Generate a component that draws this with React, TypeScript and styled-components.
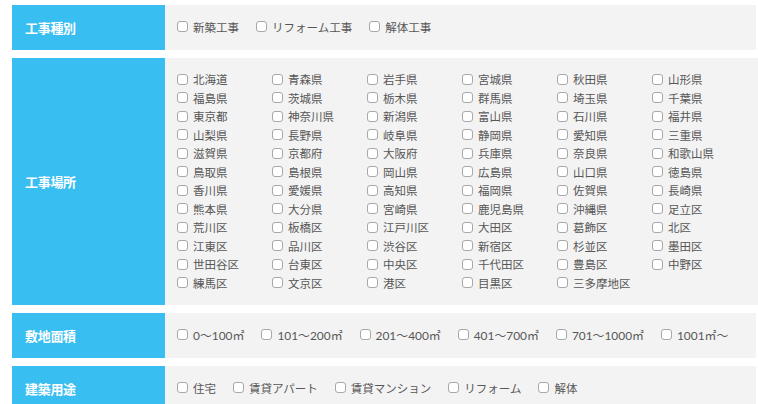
import styled, { createGlobalStyle } from "styled-components";

const GlobalStyle = createGlobalStyle`
  html, body {
    margin: 0;
    padding: 0;
    background: #fff;
  }
  body {
    font-family: Lato, "Noto Sans CJK JP", sans-serif;
  }
`;

const Page = styled.div`
  width: 744px;
  padding: 5px 2px 0 12px;
`;

const Row = styled.section`
  display: grid;
  grid-template-columns: 153px 1fr;
  margin-bottom: 8px;
  min-height: 45px;
`;

const Heading = styled.div`
  background: #38bef1;
  color: #fff;
  font-weight: bold;
  font-size: 13px;
  letter-spacing: -0.3px;
  padding-left: 13px;
  display: flex;
  align-items: center;
`;

const Body = styled.div`
  background: #f3f3f3;
  display: flex;
  align-items: center;
  padding: 12px 12px 13px 12px;
`;

const Inline = styled.div<{ $gap: number }>`
  display: flex;
  flex-wrap: wrap;
  column-gap: ${(p) => p.$gap}px;
  margin-top: -1px;
`;

const Grid = styled.div`
  display: grid;
  grid-template-columns: repeat(6, 95px);
  grid-auto-rows: 18.5px;
`;

const Item = styled.label<{ $size?: number }>`
  display: inline-flex;
  align-items: center;
  height: 18.5px;
  font-size: ${(p) => p.$size ?? 11.5}px;
  color: #575757;
  white-space: nowrap;
  cursor: pointer;
`;

const Box = styled.input.attrs({ type: "checkbox" })`
  appearance: none;
  margin: 0 5px 0 0;
  width: 11px;
  height: 11px;
  border: 1px solid #a8a8a8;
  border-radius: 3px;
  background: #fff;
  box-sizing: border-box;
  flex: none;
`;

const kinds = ["新築工事", "リフォーム工事", "解体工事"];

const places = [
  "北海道", "青森県", "岩手県", "宮城県", "秋田県", "山形県",
  "福島県", "茨城県", "栃木県", "群馬県", "埼玉県", "千葉県",
  "東京都", "神奈川県", "新潟県", "富山県", "石川県", "福井県",
  "山梨県", "長野県", "岐阜県", "静岡県", "愛知県", "三重県",
  "滋賀県", "京都府", "大阪府", "兵庫県", "奈良県", "和歌山県",
  "鳥取県", "島根県", "岡山県", "広島県", "山口県", "徳島県",
  "香川県", "愛媛県", "高知県", "福岡県", "佐賀県", "長崎県",
  "熊本県", "大分県", "宮崎県", "鹿児島県", "沖縄県", "足立区",
  "荒川区", "板橋区", "江戸川区", "大田区", "葛飾区", "北区",
  "江東区", "品川区", "渋谷区", "新宿区", "杉並区", "墨田区",
  "世田谷区", "台東区", "中央区", "千代田区", "豊島区", "中野区",
  "練馬区", "文京区", "港区", "目黒区", "三多摩地区",
];

const areas = ["0～100㎡", "101～200㎡", "201～400㎡", "401～700㎡", "701～1000㎡", "1001㎡～"];

const uses = ["住宅", "賃貸アパート", "賃貸マンション", "リフォーム", "解体"];

const Check = ({ text, size }: { text: string; size?: number }) => (
  <Item $size={size}>
    <Box />
    {text}
  </Item>
);

export default function App() {
  return (
    <>
      <GlobalStyle />
      <Page>
        <Row>
          <Heading>工事種別</Heading>
          <Body>
            <Inline $gap={17}>
              {kinds.map((k) => (
                <Check key={k} text={k} />
              ))}
            </Inline>
          </Body>
        </Row>
        <Row>
          <Heading>工事場所</Heading>
          <Body>
            <Grid>
              {places.map((p) => (
                <Check key={p} text={p} />
              ))}
            </Grid>
          </Body>
        </Row>
        <Row>
          <Heading>敷地面積</Heading>
          <Body>
            <Inline $gap={17}>
              {areas.map((a) => (
                <Check key={a} text={a} size={11.9} />
              ))}
            </Inline>
          </Body>
        </Row>
        <Row>
          <Heading>建築用途</Heading>
          <Body>
            <Inline $gap={17}>
              {uses.map((u) => (
                <Check key={u} text={u} />
              ))}
            </Inline>
          </Body>
        </Row>
      </Page>
    </>
  );
}
